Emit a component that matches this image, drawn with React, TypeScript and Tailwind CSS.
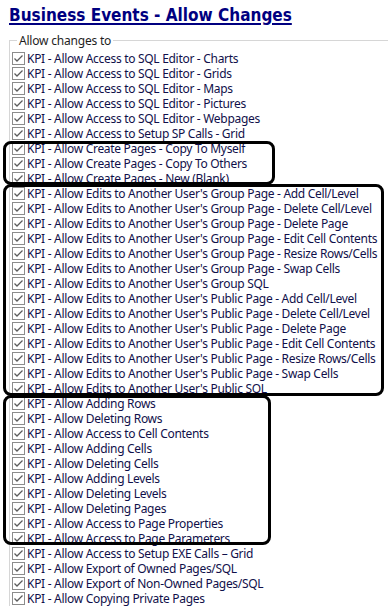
const items: string[] = [
    "KPI - Allow Access to SQL Editor - Charts",
    "KPI - Allow Access to SQL Editor - Grids",
    "KPI - Allow Access to SQL Editor - Maps",
    "KPI - Allow Access to SQL Editor - Pictures",
    "KPI - Allow Access to SQL Editor - Webpages",
    "KPI - Allow Access to Setup SP Calls - Grid",
    "KPI - Allow Create Pages - Copy To Myself",
    "KPI - Allow Create Pages - Copy To Others",
    "KPI - Allow Create Pages - New (Blank)",
    "KPI - Allow Edits to Another User's Group Page - Add Cell/Level",
    "KPI - Allow Edits to Another User's Group Page - Delete Cell/Level",
    "KPI - Allow Edits to Another User's Group Page - Delete Page",
    "KPI - Allow Edits to Another User's Group Page - Edit Cell Contents",
    "KPI - Allow Edits to Another User's Group Page - Resize Rows/Cells",
    "KPI - Allow Edits to Another User's Group Page - Swap Cells",
    "KPI - Allow Edits to Another User's Group SQL",
    "KPI - Allow Edits to Another User's Public Page - Add Cell/Level",
    "KPI - Allow Edits to Another User's Public Page - Delete Cell/Level",
    "KPI - Allow Edits to Another User's Public Page - Delete Page",
    "KPI - Allow Edits to Another User's Public Page - Edit Cell Contents",
    "KPI - Allow Edits to Another User's Public Page - Resize Rows/Cells",
    "KPI - Allow Edits to Another User's Public Page - Swap Cells",
    "KPI - Allow Edits to Another User's Public SQL",
    "KPI - Allow Adding Rows",
    "KPI - Allow Deleting Rows",
    "KPI - Allow Access to Cell Contents",
    "KPI - Allow Adding Cells",
    "KPI - Allow Deleting Cells",
    "KPI - Allow Adding Levels",
    "KPI - Allow Deleting Levels",
    "KPI - Allow Deleting Pages",
    "KPI - Allow Access to Page Properties",
    "KPI - Allow Access to Page Parameters",
    "KPI - Allow Access to Setup EXE Calls – Grid",
    "KPI - Allow Export of Owned Pages/SQL",
    "KPI - Allow Export of Non-Owned Pages/SQL",
    "KPI - Allow Copying Private Pages",
];

function CheckBox() {
    return (
        <span className="w-[13px] h-[13px] border border-[#8c8c8c] bg-white flex items-center justify-center shrink-0">
            <svg width="11" height="11" viewBox="0 0 11 11">
                <path d="M1.5 5.5 L4 8 L9.5 2.5" fill="none" stroke="#5c5c5c" strokeWidth="1.3" />
            </svg>
        </span>
    );
}

export default function App() {
    return (
        <div className="relative w-[388px] h-[606px] overflow-hidden bg-white" style={{ fontFamily: '"Noto Sans", "Open Sans", sans-serif' }}>
            <h1 className="pl-[9px] pt-[4px] h-[33px] text-[17px] font-bold text-[#000080] underline underline-offset-[2px] decoration-[2px] leading-[22px]" style={{ fontFamily: '"DejaVu Sans Condensed", "Liberation Sans", sans-serif' }}>
                Business Events - Allow Changes
            </h1>

            <fieldset className="ml-[9px] w-[420px] border border-[#d6d6d6] pl-[2px]">
                <legend className="ml-[5px] px-[2px] text-[12px] leading-[15px] text-[#1e1e1e] tracking-[-0.2px]">Allow changes to</legend>
                <ul className="pt-[3px]">
                    {items.map((label, i) => (
                        <li key={i} className="flex items-center h-[15px] gap-[2px]">
                            <CheckBox />
                            <span className="text-[12px] leading-[15px] text-[#10104a] whitespace-nowrap tracking-[-0.3px]">{label}</span>
                        </li>
                    ))}
                </ul>
            </fieldset>

            {/* annotation outlines */}
            <div className="absolute left-[3px] top-[141px] w-[272px] h-[44px] border-[3px] border-black rounded-[8px]" />
            <div className="absolute left-[3px] top-[184px] w-[381px] h-[212px] border-[3px] border-black rounded-[8px]" />
            <div className="absolute left-[3px] top-[395px] w-[268px] h-[150px] border-[3px] border-black rounded-[8px]" />
        </div>
    );
}
